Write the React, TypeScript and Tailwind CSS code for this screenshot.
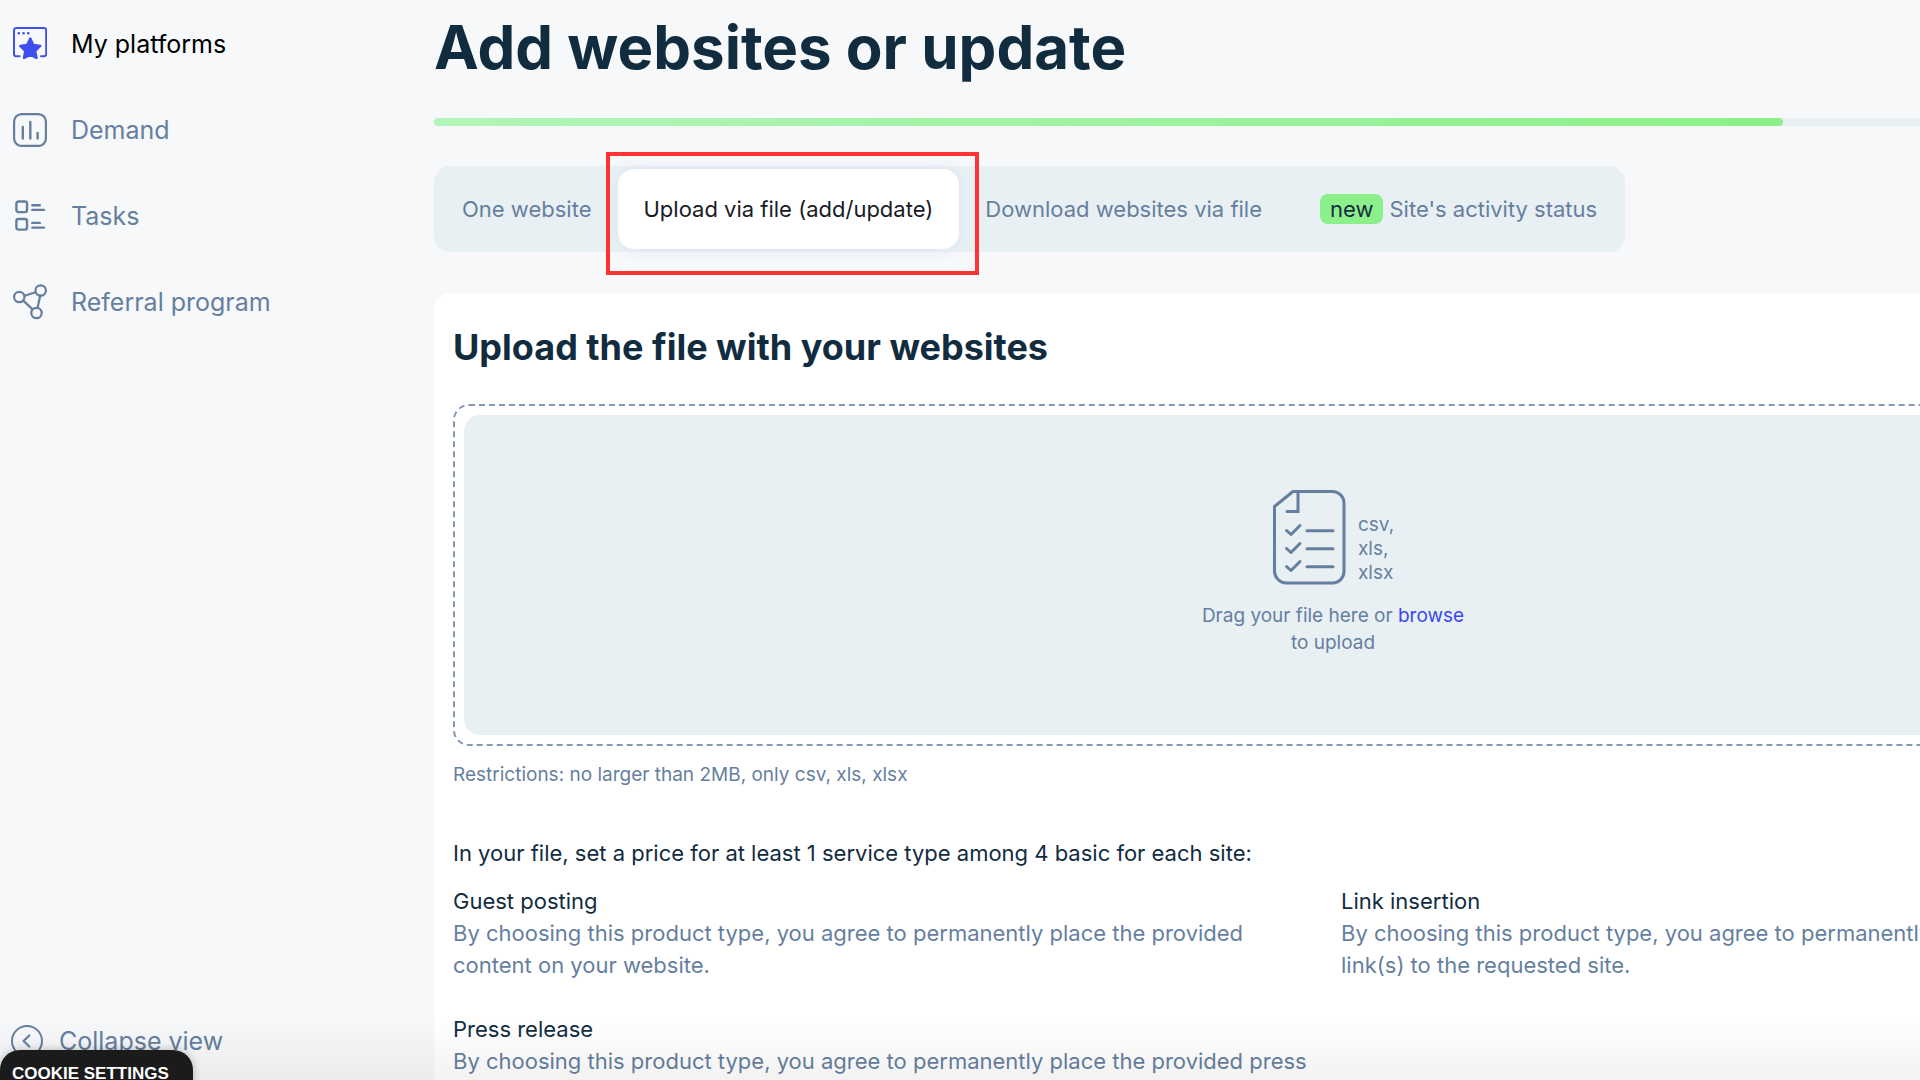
import type { ReactNode } from "react"

interface NavItemProps {
  label: string
  icon: ReactNode
  active?: boolean
}

const NavItem = ({ label, icon, active }: NavItemProps) => (
  <a
    href="#"
    className={`flex items-center gap-6 h-[38px] text-[25px] leading-[38px] ${active ? "text-black" : "text-[#667f9f]"}`}
  >
    {icon}
    <span>{label}</span>
  </a>
)

const PlatformsIcon = () => (
  <svg width="34" height="34" viewBox="0 0 34 34" fill="none" stroke="#3f4fee" strokeWidth="2" strokeLinecap="round">
    <path d="M6.5 29.2H3.2A2.2 2.2 0 0 1 1 27V3.2A2.2 2.2 0 0 1 3.2 1H31a2.2 2.2 0 0 1 2.2 2.2V27a2.2 2.2 0 0 1-2.2 2.2h-3" />
    <path d="M5.8 6.3h.1M10.5 6.3h.1M15.2 6.3h.1" strokeWidth="2.6" />
    <path
      d="M17.3 11.5l3 6.5 7 1-5.1 5 1.3 7-6.2-3.4L11 31l1.3-7-5.1-5 7-1z"
      fill="#3f4fee"
      strokeWidth="2.4"
      strokeLinejoin="round"
    />
  </svg>
)

const DemandIcon = () => (
  <svg width="34" height="34" viewBox="0 0 34 34" fill="none" stroke="#667f9f" strokeWidth="2.2" strokeLinecap="round">
    <rect x="1.1" y="1.1" width="31.8" height="31.8" rx="7.5" />
    <path d="M9.8 14v11.5M17.3 9v16.5M24.6 20v5.5" strokeWidth="2.4" />
  </svg>
)

const TasksIcon = () => (
  <svg width="34" height="34" viewBox="0 0 34 34" fill="none" stroke="#667f9f" strokeWidth="2.4" strokeLinecap="round">
    <rect x="3.4" y="2.5" width="10.6" height="10.6" rx="2" />
    <rect x="3.4" y="20" width="10.6" height="10.6" rx="2" />
    <path d="M19.3 6.2h7.5M19.3 10.9H31M19.3 23.9h7.5M19.3 28.6H31" />
  </svg>
)

const ReferralIcon = () => (
  <svg width="34" height="36" viewBox="0 0 34 36" fill="none" stroke="#667f9f" strokeWidth="2.2" strokeLinecap="round">
    <circle cx="6.3" cy="13" r="5.2" />
    <circle cx="27.7" cy="6.5" r="5.2" />
    <circle cx="23.5" cy="29" r="5.2" />
    <path d="M11.5 11.8l11-3.6M10 16.4l9.6 9M27.2 11.6l-2.6 12.2" />
  </svg>
)

const CollapseIcon = () => (
  <svg width="32" height="32" viewBox="0 0 32 32" fill="none" stroke="#667f9f" strokeWidth="2" strokeLinecap="round">
    <circle cx="16" cy="16" r="15" />
    <path d="M18.3 10.5L12.5 16l5.8 5.5" strokeWidth="2.2" strokeLinejoin="round" />
  </svg>
)

const FileIcon = () => (
  <svg width="74" height="96" viewBox="0 0 74 96" fill="none" stroke="#667f9f" strokeWidth="3" strokeLinecap="round">
    <path d="M21 2.5h39.5A11.5 11.5 0 0 1 72 14v68.5A11.5 11.5 0 0 1 60.5 94h-46A12 12 0 0 1 2.5 82V17.5z" strokeLinejoin="round" />
    <path d="M26 3v19.5H15" />
    <path d="M14.5 41.5l4.5 4 9-9M14.5 59.5l4.5 4 9-9M14.5 77.5l4.5 4 9-9" strokeLinejoin="round" />
    <path d="M35 41.8h26M35 59.8h26M35 77.8h26" />
  </svg>
)

export default function App() {
  const services = [
    {
      title: "Guest posting",
      lines: ["By choosing this product type, you agree to permanently place the provided content on your website."],
    },
    {
      title: "Link insertion",
      lines: ["By choosing this product type, you agree to permanently", "link(s) to the requested site."],
    },
    {
      title: "Press release",
      lines: ["By choosing this product type, you agree to permanently place the provided press"],
    },
  ]

  return (
    <div className="relative flex h-screen overflow-hidden bg-[#f6f8fa] font-[Inter,sans-serif] text-[#122c3f]">
      <aside className="flex w-[434px] shrink-0 flex-col justify-between pt-[25px] pb-5">
        <nav className="flex flex-col gap-12 pl-[13px]">
          <NavItem label="My platforms" icon={<PlatformsIcon />} active />
          <NavItem label="Demand" icon={<DemandIcon />} />
          <NavItem label="Tasks" icon={<TasksIcon />} />
          <NavItem label="Referral program" icon={<ReferralIcon />} />
        </nav>
        <button type="button" className="flex items-center gap-4 pl-[11px] text-[25px] leading-[38px] text-[#667f9f]">
          <CollapseIcon />
          Collapse view
        </button>
      </aside>

      <main className="min-w-0 flex-1">
        <div className="w-[121%]">
          <h1 className="pt-2 text-[60px] leading-[78px] font-bold">Add websites or update</h1>
          <div className="mt-8 h-2 rounded-full bg-[#e8f0f3]">
            <div className="h-2 w-3/4 rounded-full bg-linear-to-r from-[#b2f5b9] to-[#8bf087]" />
          </div>

          <div className="mt-10 flex h-[86px] w-fit items-center rounded-2xl bg-[#e8f0f3] px-7 text-[22px] text-[#667f9f]">
            <button type="button">One website</button>
            <div className="relative mx-[26px]">
              <button
                type="button"
                className="h-20 rounded-2xl bg-white px-[26px] text-[#171b26] shadow-[0_0_14px_#dbe5f3]"
              >
                Upload via file (add/update)
              </button>
              <div className="pointer-events-none absolute -top-[17px] -right-5 -bottom-[26px] -left-3 border-4 border-[#ff3333]" />
            </div>
            <button type="button">Download websites via file</button>
            <button type="button" className="ml-[58px] flex items-center gap-[6px]">
              <span className="rounded-lg bg-[#8cf08a] px-[10px] leading-[30px] text-[#122c3f]">new</span>
              Site's activity status
            </button>
          </div>

          <section className="mt-[41px] h-screen rounded-2xl bg-white px-[19px] pt-[30px]">
            <h2 className="text-[36px] leading-[48px] font-bold">Upload the file with your websites</h2>
            <div className="mt-[33px] rounded-2xl border-2 border-dashed border-[#8398b3] p-[9px]">
              <div className="flex h-80 flex-col items-center rounded-2xl bg-[#e8f0f3] pt-[74px] text-[19px] text-[#667f9f]">
                <div className="flex items-end gap-3">
                  <FileIcon />
                  <p className="leading-6">
                    csv,
                    <br />
                    xls,
                    <br />
                    xlsx
                  </p>
                </div>
                <p className="mt-[17px] text-center leading-[27px]">
                  Drag your file here or{" "}
                  <button type="button" className="text-[#3a47f0]">
                    browse
                  </button>
                  <br />
                  to upload
                </p>
              </div>
            </div>
            <p className="mt-[17px] text-[19px] leading-6 text-[#667f9f]">
              Restrictions: no larger than 2MB, only csv, xls, xlsx
            </p>
            <p className="mt-[50px] text-[22px] leading-8">
              In your file, set a price for at least 1 service type among 4 basic for each site:
            </p>
            <div className="mt-4 grid grid-cols-2 gap-x-4 gap-y-8 text-[22px] leading-8">
              {services.map((service) => (
                <div key={service.title}>
                  <h3>{service.title}</h3>
                  {service.lines.map((line) => (
                    <p key={line} className="text-[#667f9f]">
                      {line}
                    </p>
                  ))}
                </div>
              ))}
            </div>
          </section>
        </div>
      </main>

      <div className="pointer-events-none absolute inset-x-0 bottom-0 h-16 bg-linear-to-t from-black/5 to-transparent" />
      <button
        type="button"
        className="absolute -bottom-[18px] left-0 h-12 rounded-t-[20px] bg-[#1b1b1b] pr-6 pl-3 font-['Liberation_Sans',sans-serif] text-[17px] font-bold text-white shadow-[0_0_8px_#00000040]"
      >
        COOKIE SETTINGS
      </button>
    </div>
  )
}
